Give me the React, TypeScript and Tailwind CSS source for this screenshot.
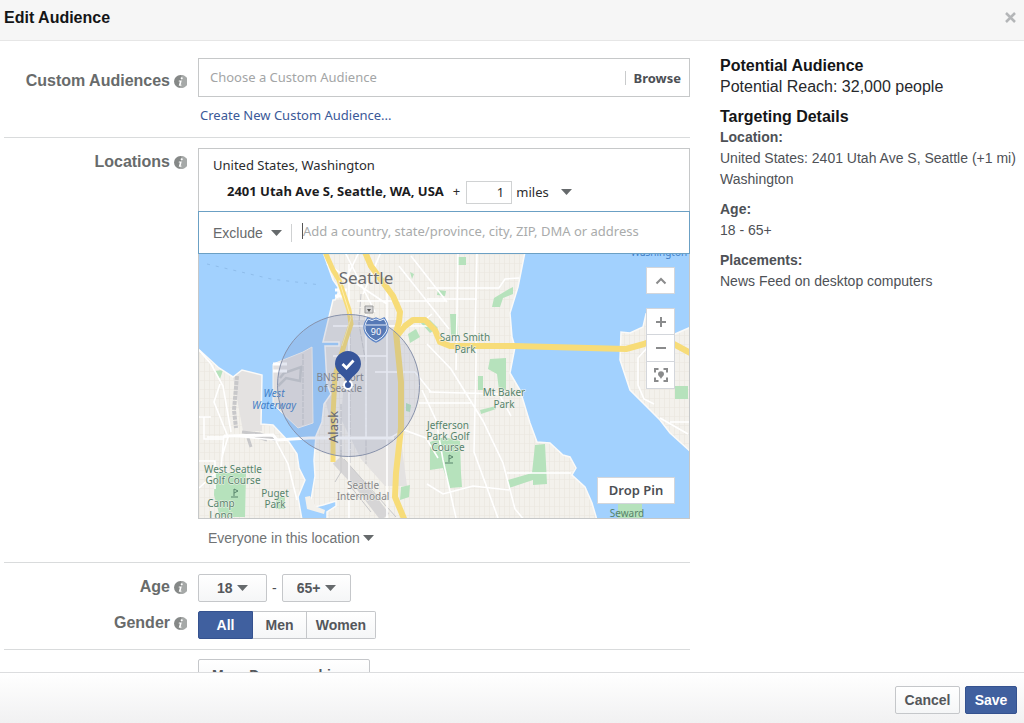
import { useState } from "react";
import type { ReactNode } from "react";

// Modal for editing an ad set's audience: form on the left, summary on the right.

function InfoIcon() {
  return (
    <svg className="w-[13px] h-[13px] shrink-0" viewBox="0 0 12 12" aria-hidden="true">
      <circle cx="6" cy="6" r="6" fill="#858887" />
      <path d="M7 0a6 6 0 0 1 0 12L5.500 12z" fill="#a6a9a8" />
      <circle cx="7.100" cy="3" r="1" fill="#fff" />
      <path d="M4.500 5.100h2.600L6.200 9.100h.8l-.3.800H4.400l1-4h-1.100z" fill="#fff" />
    </svg>
  );
}

function Caret({ className = "" }: { className?: string }) {
  return (
    <svg className={`w-[11px] h-[6px] pointer-events-none ${className}`} viewBox="0 0 11 6" aria-hidden="true">
      <path d="M0 0h11L5.500 6z" fill="#666a6c" />
    </svg>
  );
}

interface RowProps {
  label: string;
  htmlFor?: string;
  labelClass: string;
  children: ReactNode;
}

function Row({ label, htmlFor, labelClass, children }: RowProps) {
  return (
    <div className="grid grid-cols-[183px_1fr] gap-x-[11px]">
      <div className={`flex items-center justify-end gap-1 self-start ${labelClass}`}>
        <label htmlFor={htmlFor} className="text-base leading-5 font-bold text-[#686b6b]">
          {label}
        </label>
        <InfoIcon />
      </div>
      <div className="min-w-0">{children}</div>
    </div>
  );
}

function MapArt() {
  return (
    <svg
      className="block w-full h-[264px]"
      viewBox="0 0 490 264"
      preserveAspectRatio="xMidYMid slice"
      fontFamily="'Noto Sans', sans-serif"
      role="img"
      aria-label="Map of Seattle"
    >
      <defs>
        <pattern id="blocks" width="15" height="18" patternUnits="userSpaceOnUse">
          <path d="M0 .5h15M0 9.500h15" stroke="#eeebe5" />
          <path d="M.5 0v18M5.500 0v18M10.500 0v18" stroke="#ebe7e0" strokeWidth=".7" />
        </pattern>
      </defs>
      <rect width="490" height="264" fill="#f3f1ec" />
      <rect width="490" height="264" fill="url(#blocks)" />

      {/* industrial areas */}
      <g fill="#e4e2e1">
        <path d="M34 123l9-7 20 5v56H44zM134 46l12 0 8 40-20 40-2 44-8-34V86zM150 66h50v96l4 40 4 30h-22l-24-27-20-40z" />
      </g>

      {/* parks */}
      <g fill="#b6e2bc">
        <path d="M16 219h31l-1 44H21l-6-22zM77 243h9v12h-9zM202 233l9-2-1 12-9 3zM209 80l8-5 4 8-10 6zM221 68l10-2 8 8-8 5zM295 44l15-9 4-2v7l-10 4-3 9-8 0zM259 3h8v8h-8zM239 36l8 1-1 5-8-1zM251 60h7l1 21h-7zM291 105l16-1v32h-7l-2-16-9-5zM231 188l14-5 16 4 1 32 1 14-12 1-7-20-13 2zM336 191l10-1 2 40-14 1v-5l-24 8-1-8 24-7zM281 156l16-4v3l-15 5zM338 188l6-6 4 6zM15 117l9-1-3 9zM207 149l5 2-1 7-4-1zM279 122h5v14h-5zM211 18l4 2-2 5z" />
      </g>

      {/* rail yards */}
      <g fill="none" stroke="#c8c8ca">
        <path d="M38 122l-3 34 2 18" strokeWidth="4" strokeDasharray="4 1" />
        <path d="M43 178l18 2 16 6M49 184l3 9M56 182l12 4" strokeWidth="3" />
        <path d="M138 206l24 26 24 31" strokeWidth="11" stroke="#d6d5d6" />
        <path d="M142 196v22l-6 10M145 205l52 58M148 228l24 30" />
        <path d="M151 70v140M162 40l-2 30 7 40v100M142 150v54" strokeDasharray="6 1" />
      </g>

      {/* water */}
      <g fill="#a2d1fe" stroke="#fbfaf8" strokeWidth="1.500">
        <path d="M-2-2H124L129 12 134 26 139 33 139 39 136 46 134 46 124 88 140 88 140 92 126 92 128 130 132 140 125 150 123 168 117 182 115 206 116 222 112 246 116 253 124 251 137 247 137 252 128 258 128 266H103L99 243 106 226 100 214 98 200 90 188 74 171 62 170 63 121 43 116 34 123 20 114 8 103-2 94z" />
        <path d="M326-2L319 33 311 59 313 83 316 93 311 119 321 136 331 169 338 188 351 189 364 201 371 203 377 214 373 221 386 233 393 249 398 266H492V198L471 179 461 166 448 153 431 136 421 106 422 78 431 79 444 73 447 60 465 66 476 80 492 73V-2z" />
      </g>
      <path d="M419 250h24v14h-24zM476 132h13v13h-13z" fill="#b6e2bc" />
      <path d="M74 110l30-12 9-5 1 76-15 5-19-18-6-6z" fill="#e2e0e0" stroke="#f5f4f2" />
      <path d="M106 243l5-1 5 10 10 4-1 4-17-5z" fill="#f3f1ec" />
      <path d="M81 124l4-5 17-6-1 14-14-3-8 8" fill="none" stroke="#c8c9ca" strokeWidth="2.500" />
      <path d="M104 100v72" stroke="#c5c6c8" strokeDasharray="5 1" />
      <path d="M8 10l64 15 50 6" fill="none" stroke="#8fbdeb" strokeDasharray="3 6" />
      <path d="M136 36h12M136 42h12M74 110h14M74 117h14" stroke="#fff" strokeWidth="3" />

      {/* streets */}
      <g fill="none" stroke="#fff" strokeWidth="1.600">
        <path d="M0 96l12 14 12 22 8 46M21 130l-6 18 14 35-6 20M0 234l22-20 3-32h6l14 1 32 3 30-2h84l14-8 22 8 12 20" />
        <path d="M77 187l12 23 9 36M0 163h12M5 163v22h20M30 183H8M0 207h16v28" />
        <path d="M150 10v254M188 34v230M167 60v124M134 72h100M134 102h54M176 118h40l16 20M158 47h90M200 12l50 63M212 2l36 46M128 10l60 40M146-2l30 60M160-2l-22 46M182-2l-18 42" />
        <path d="M259-2l-2 118M278-2l-2 82M228 34h72l6-9 14-1M228 45h50M228 90l24 25 32 52 20 42 12 46 10 12M277 80v28l-2 90 24 66M220 149h52M223 136l14 30 7 40 13 58M228 230l16 10 30-8 36 4M308 219h64M312 162l-12-22-70-2M233 60l-5 4" />
        <path d="M448 94l-9 10v27l6 14 10 5M471 168h20M461 164l28 16" />
        <path d="M25 182l49-1 4 5 32-2h85" strokeWidth="3" />
      </g>

      {/* freeways */}
      <g fill="none" stroke="#f7dc78" strokeLinejoin="round">
        <path d="M126-2l8 18 6 10 10 30 2 14-6 18-10 34-2 40v46" strokeWidth="5" />
        <path d="M166-2l6 14 22 30 7 16-1 10-3 10 5 50v46l-5 45-1 24 10 24" strokeWidth="6" />
        <path d="M198 82l8-10 8-6h12l10 10 5 12 10 4h64l112 3 18-5 14-6 12 4 26 14" strokeWidth="6" />
      </g>
      <path d="M140 26l12 38-9 28" fill="none" stroke="#fff0b0" />

      {/* area labels */}
      <g textAnchor="middle" fontSize="10" fill="#56836b" stroke="#f4f3ee" strokeWidth="1" paintOrder="stroke">
        <text x="266" y="87">Sam Smith</text>
        <text x="266" y="99">Park</text>
        <text x="305" y="142">Mt Baker</text>
        <text x="305" y="154">Park</text>
        <text x="249" y="175">Jefferson</text>
        <text x="249" y="186">Park Golf</text>
        <text x="249" y="197">Course</text>
        <text x="34" y="219">West Seattle</text>
        <text x="34" y="230">Golf Course</text>
        <text x="22" y="253">Camp</text>
        <text x="22" y="265">Long</text>
        <text x="76" y="243">Puget</text>
        <text x="76" y="254">Park</text>
        <text x="428" y="263" stroke="none">Seward</text>
      </g>
      <g textAnchor="middle" fontSize="10" fill="#858688">
        <text x="141" y="127">BNSF Port</text>
        <text x="141" y="138">of Seattle</text>
        <text x="164" y="235" stroke="#f4f3ee" strokeWidth="1" paintOrder="stroke">Seattle</text>
        <text x="164" y="246" stroke="#f4f3ee" strokeWidth="1" paintOrder="stroke">Intermodal</text>
      </g>
      <g textAnchor="middle" fontSize="10" fill="#4280c6">
        <text x="75" y="143" fontStyle="italic">West</text>
        <text x="75" y="155" fontStyle="italic">Waterway</text>
        <text x="460" y="2">Washington</text>
      </g>
      <text x="167" y="30" textAnchor="middle" fontSize="17" fill="#6b6b6d" stroke="#f6f5f1" strokeWidth="1" paintOrder="stroke">
        Seattle
      </text>
      <text x="139" y="189" fontSize="13" fill="#66666a" transform="rotate(-90 139 189)">
        Alask
      </text>
      <path d="M35 242v-7l4 2-4 2M32 243h7M250 208v-7l4 2-4 2M246 209h8" fill="none" stroke="#56836b" />

      {/* one mile radius */}
      <circle cx="149.500" cy="131.500" r="71" fill="#6678ad" fillOpacity=".17" stroke="#8791aa" />

      {/* station and interstate shield */}
      <path d="M166 52h8v7h-8z" fill="#d5d5d5" stroke="#9a9a9a" />
      <path d="M168 55h4l-2 3z" fill="#555" />
      <path d="M169 65q4 3 8 0 4 3 8 0 5 7 2 13-3 6-10 9-7-3-10-9-3-6 2-13z" fill="#5b83c6" stroke="#5b83c6" strokeWidth="3" />
      <path d="M169 65q4 3 8 0 4 3 8 0 5 7 2 13-3 6-10 9-7-3-10-9-3-6 2-13z" fill="#5679b6" stroke="#e7effa" />
      <path d="M167 71h20" stroke="#e7effa" />
      <text x="177" y="81" textAnchor="middle" fontSize="9" fill="#fff">90</text>

      {/* pin */}
      <circle cx="149" cy="131" r="5" fill="#fff" />
      <circle cx="149" cy="131" r="3" fill="#37569b" />
      <path d="M149 130c-2-8-13-11-13-20a13 13 0 0 1 26 0c0 9-11 12-13 20z" fill="#37569b" />
      <path d="M143.500 110l4 4 7-7.500" fill="none" stroke="#fff" strokeWidth="2.800" />
    </svg>
  );
}

const mapButton = "flex w-[29px] h-[27px] items-center justify-center bg-white border border-[#d3d6db] text-[#8a8b8c]";
const lucida = "font-['Noto_Sans',sans-serif]";
const greyButton = "rounded-xs border border-[#c5c7ca] bg-linear-to-b from-white to-[#f5f6f7] text-sm font-bold text-[#54575b]";

function LocationsField() {
  const [radius, setRadius] = useState("1");

  return (
    <>
      <div className={`border border-b-0 border-[#c6c8c9] px-[14px] pt-[6px] h-[63px] text-[13px] text-[#2b2c2e] ${lucida}`}>
        <p className="leading-5">United States, Washington</p>
        <div className="mt-[5px] flex h-6 items-center pl-[14px]">
          <span className="font-bold text-[#1c1c1e]">2401 Utah Ave S, Seattle, WA, USA</span>
          <span className="ml-[9px]">+</span>
          <input
            aria-label="Radius"
            className="ml-[6px] w-[46px] h-[23px] border border-[#d0d2d3] pr-[7px] text-right"
            value={radius}
            onChange={(e) => setRadius(e.target.value)}
          />
          <div className="relative ml-1 flex items-center">
            <select aria-label="Distance unit" className="appearance-none w-[56px] leading-5">
              <option>miles</option>
              <option>km</option>
            </select>
            <Caret className="absolute right-0" />
          </div>
        </div>
      </div>

      <div className="flex h-[43px] items-center border border-[#6ba0c4] pl-[14px]">
        <div className="relative flex items-center">
          <select aria-label="Include or exclude" className="appearance-none w-[69px] text-sm leading-5 text-[#66696b]">
            <option>Exclude</option>
            <option>Include</option>
          </select>
          <Caret className="absolute right-0" />
        </div>
        <span className="ml-[9px] h-[18px] w-px bg-[#cfd1d2]" />
        <span className="ml-[10px] mb-1 h-4 w-px bg-[#555]" />
        <input
          id="locations"
          className={`mb-1 flex-1 min-w-0 text-[13px] leading-5 placeholder:text-[#a9abab] ${lucida}`}
          placeholder="Add a country, state/province, city, ZIP, DMA or address"
        />
      </div>

      <div className="relative overflow-hidden border border-t-0 border-[#c6c8c9]">
        <MapArt />
        <div className="absolute right-[14px] top-[13px] flex flex-col">
          <button className={mapButton} aria-label="Collapse map">
            <svg width="12" height="8" viewBox="0 0 12 8" fill="none" stroke="currentColor" strokeWidth="2">
              <path d="M1.500 6.500L6 2l4.500 4.500" />
            </svg>
          </button>
          <button className={`${mapButton} mt-[14px]`} aria-label="Zoom in">
            <svg width="10" height="10" viewBox="0 0 10 10" stroke="currentColor" strokeWidth="2">
              <path d="M5 0v10M0 5h10" />
            </svg>
          </button>
          <button className={`${mapButton} border-t-0`} aria-label="Zoom out">
            <svg width="10" height="10" viewBox="0 0 10 10" stroke="currentColor" strokeWidth="2">
              <path d="M0 5h10" />
            </svg>
          </button>
          <button className={`${mapButton} border-t-0`} aria-label="Fit to pins">
            <svg width="14" height="14" viewBox="0 0 14 14" fill="none" stroke="currentColor" strokeWidth="2">
              <path d="M1 4.500V1h3.500M9.500 1H13v3.500M13 9.500V13H9.500M4.500 13H1V9.500" />
              <path d="M7 11C6.500 9 4 8 4 6.200a3 3 0 0 1 6 0C10 8 7.500 9 7 11z" fill="currentColor" stroke="none" />
            </svg>
          </button>
        </div>
        <button className="absolute bottom-[14px] right-[14px] h-[27px] w-[78px] border border-[#d3d6db] bg-white font-['Noto_Sans',sans-serif] text-[13px] font-semibold text-[#4c4f54]">
          Drop Pin
        </button>
      </div>

      <div className="relative mt-[9px] ml-[10px] flex w-[166px] items-center">
        <select aria-label="People in this location" className="appearance-none w-full text-sm leading-5 text-[#707375]">
          <option>Everyone in this location</option>
          <option>People who live in this location</option>
        </select>
        <Caret className="absolute right-0" />
      </div>
    </>
  );
}

function AgeSelect({ id, label, values }: { id: string; label: string; values: string[] }) {
  return (
    <div className="relative flex items-center">
      <select
        id={id}
        aria-label={label}
        className={`${greyButton} h-7 appearance-none w-[69px] ${values[0].length > 2 ? "pl-[14px]" : "pl-[18px]"}`}
      >
        {values.map((v) => (
          <option key={v}>{v}</option>
        ))}
      </select>
      <Caret className={`absolute ${values[0].length > 2 ? "right-[15px]" : "right-[19px]"}`} />
    </div>
  );
}

function Summary() {
  return (
    <aside className="w-[304px] shrink-0 pt-[14px] text-sm text-[#4e5156]">
      <h2 className="text-base leading-[21px] font-bold text-[#141517]">Potential Audience</h2>
      <p className="text-base leading-[21px] text-[#27292c]">Potential Reach: 32,000 people</p>
      <h2 className="mt-[9px] text-base leading-[21px] font-bold text-[#141517]">Targeting Details</h2>
      <h3 className="leading-[21px] font-bold">Location:</h3>
      <p className="leading-[21px] whitespace-nowrap">United States: 2401 Utah Ave S, Seattle (+1 mi)</p>
      <p className="leading-[21px]">Washington</p>
      <h3 className="mt-[9px] leading-[21px] font-bold">Age:</h3>
      <p className="leading-[21px]">18 - 65+</p>
      <h3 className="mt-[9px] leading-[21px] font-bold">Placements:</h3>
      <p className="leading-[21px]">News Feed on desktop computers</p>
    </aside>
  );
}

export default function App() {
  const [gender, setGender] = useState("All");
  const genders = [
    { name: "All", width: "w-[55px]" },
    { name: "Men", width: "w-[54px]" },
    { name: "Women", width: "w-[69px]" },
  ];

  return (
    <div className="flex h-screen flex-col overflow-hidden bg-white font-['Liberation_Sans',Arial,sans-serif]">
      {/* Header */}
      <header className="flex h-[41px] shrink-0 items-center justify-between border-b border-[#e6e6e6] bg-[#f6f6f6] pl-1 pr-[8px] pb-[5px]">
        <h1 className="text-base font-bold text-[#141517]">Edit Audience</h1>
        <button aria-label="Close" className="text-[#b4b6b8]">
          <svg width="11" height="11" viewBox="0 0 11 11" stroke="currentColor" strokeWidth="2.500">
            <path d="M1 1l9 9M10 1l-9 9" />
          </svg>
        </button>
      </header>

      {/* Content */}
      <div className="flex min-h-0 flex-1 gap-[30px] overflow-hidden pl-1">
        <main className="min-w-0 flex-1">
          <section className="pt-[17px] pb-3 border-b border-[#d9dbdc]">
            <Row label="Custom Audiences" htmlFor="custom-audience" labelClass="pt-[13px]">
              <div className={`flex h-[39px] items-center border border-[#c6c8c9] pl-[11px] pr-2 text-[13px] ${lucida}`}>
                <input
                  id="custom-audience"
                  className="flex-1 min-w-0 placeholder:text-[#a3a5a6]"
                  placeholder="Choose a Custom Audience"
                />
                <button className="border-l border-[#c9cbcc] pl-2 leading-[14px] font-bold text-[#4c4f54]">Browse</button>
              </div>
              <a href="#" className={`mt-2 ml-[2px] block text-[13px] leading-5 text-[#3b5998] ${lucida}`}>
                Create New Custom Audience...
              </a>
            </Row>
          </section>

          <section className="pt-[10px] pb-[14px] border-b border-[#d9dbdc]">
            <Row label="Locations" htmlFor="locations" labelClass="pt-1">
              <LocationsField />
            </Row>
          </section>

          <section className="flex flex-col gap-[9px] pt-[11px] pb-[10px] border-b border-[#d9dbdc]">
            <Row label="Age" htmlFor="age-min" labelClass="pt-[3px]">
              <div className="flex items-center gap-[5px] text-sm text-[#4c4f54]">
                <AgeSelect id="age-min" label="Minimum age" values={["18", "21", "25"]} />
                <span>-</span>
                <AgeSelect id="age-max" label="Maximum age" values={["65+", "64", "50"]} />
              </div>
            </Row>
            <Row label="Gender" labelClass="pt-[2px]">
              <div className="flex">
                {genders.map((g) => (
                  <button
                    key={g.name}
                    onClick={() => setGender(g.name)}
                    aria-pressed={gender === g.name}
                    className={`h-7 border text-sm font-bold first:rounded-l-xs last:rounded-r-xs ${g.width} ${
                      gender === g.name
                        ? "border-[#35528f] bg-[#40609f] text-white"
                        : "border-l-0 border-[#c5c7ca] bg-linear-to-b from-white to-[#f5f6f7] text-[#54575b]"
                    }`}
                  >
                    {g.name}
                  </button>
                ))}
              </div>
            </Row>
          </section>

          <section className="pt-[9px]">
            <div className="grid grid-cols-[183px_1fr] gap-x-[11px]">
              <button className={`${greyButton} col-start-2 flex h-8 w-[172px] items-center justify-between justify-self-start px-[13px]`}>
                More Demographics
              </button>
            </div>
          </section>
        </main>

        <Summary />
      </div>

      {/* Footer */}
      <footer className="flex h-[51px] shrink-0 items-center justify-end gap-[5px] border-t border-[#dcdddf] bg-linear-to-b from-white to-[#f1f1f2] pr-[7px] pt-1">
        <button className={`${greyButton} h-7 w-[65px]`}>Cancel</button>
        <button className="h-7 w-[52px] rounded-xs border border-[#35528f] bg-[#40609f] text-sm font-bold text-white">Save</button>
      </footer>
    </div>
  );
}
